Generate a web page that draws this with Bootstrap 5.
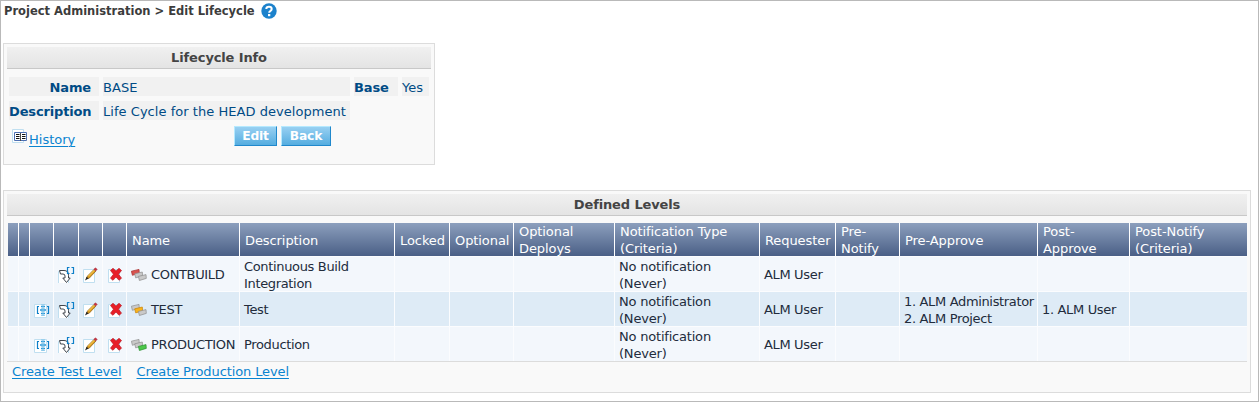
<!DOCTYPE html>
<html lang="en">
<head>
<meta charset="utf-8">
<title>Edit Lifecycle</title>
<link href="https://cdn.jsdelivr.net/npm/bootstrap@5.3.0/dist/css/bootstrap.min.css" rel="stylesheet">
<style>
body{font:13px/17px "DejaVu Sans",sans-serif;color:#222c3c;background:#fff;margin:0}
.page{height:402px;border:1px solid #b9b9b9;padding:0 0 0 2px;overflow:hidden}
.crumb{height:42px;padding:1px 0 0 1px;font-size:11.5px;font-weight:700;color:#3c3c3c}
.crumb-text{line-height:19px;white-space:nowrap}
.help{margin:1px 0 0 6px}
.panel{background:#f9f9f9;border:1px solid #dcdcdc;padding:3px;border-radius:0}
.panel-info{width:432px;height:122px}
.panel-levels{width:1248px;height:203px;margin-top:25px}
.panel-title{height:22px;line-height:21px;text-align:center;font-weight:700;font-size:13px;letter-spacing:-.13px;color:#444;background:linear-gradient(#f0f0f0,#e4e4e4);border-bottom:1px solid #c8c8c8}
.info-grid{display:grid;grid-template-columns:90px 247px 44px 27px;column-gap:4px;row-gap:5px;margin:8px 0 0 2px;color:#004b85}
.info-grid>div{height:19px;line-height:21px;background:#f1f1f1;white-space:nowrap;letter-spacing:.04px}
.info-grid .lbl{font-weight:700;letter-spacing:-.15px}
.info-actions{margin-top:6px}
.hist{width:227px;padding:3px 0 0 5px}
.hist a{margin-top:2px}
a{color:#0a84d0;text-decoration:underline;text-underline-offset:2px;text-decoration-thickness:1px}
.btn-act{height:20px;padding:0;border-radius:0;border:1px solid;border-color:#b5e9ff #2088cc #2088cc #b5e9ff;background:linear-gradient(#98d0f2,#55ade0);color:#fff;font-weight:700;font-size:12.3px;line-height:18px;letter-spacing:-.15px}
.btn-edit{width:43px}.btn-back{width:50px}
.levels{table-layout:fixed;width:1239px;margin:7px 0 0 1px;border-collapse:separate;border-spacing:0}
.levels th{font-weight:400;color:#fff;background:linear-gradient(#8c9fbd,#4a5f86);height:33px;border-right:1px solid #fff;padding:1px 0 0 5px;line-height:17px;white-space:nowrap;background-clip:padding-box;letter-spacing:-.08px}
.levels td{background:#f3f7fc;border-right:1px solid #fbfcfe;border-top:1px solid #fbfcfe;padding:1px 0 0 4px;height:35px;line-height:17px;white-space:nowrap;vertical-align:middle;letter-spacing:-.2px}
.levels .lines{margin-bottom:-1px}
.levels th .lines{margin-top:-1px}
.levels .tight{letter-spacing:-.34px}
.levels tr.alt td{background:#deebf6}
.levels td.ico{padding:0}
.levels svg,.crumb svg,.hist svg{display:block;flex:none}
.levels tr>:last-child{border-right:0}
.foot-links{border-top:1px solid #dcdcdc;padding:1px 0 0 5px;gap:15px;letter-spacing:-.11px}
</style>
</head>
<body>
<svg width="0" height="0" class="position-absolute"><defs>
<g id="move"><path d="M.5 6.500h10v12H.5z" fill="#fff" stroke="#c0dff0"/><path d="M1.500 5.500H6q4.500 0 4.500 5v2.500h1.700L8.500 17.500 4.800 13H7v-2q0-2-2-2H2.500z" fill="#fff" stroke="#3f454c" stroke-linejoin="round"/><path d="M11.500 2.500H9.500v6h2M13.500 2.500h2v6h-2" fill="none" stroke="#0d7fc8" stroke-width="1.200"/></g>
<g id="split"><path d="M.5 4.500h12v13H.5z" fill="#fff" stroke="#c0dff0"/><path d="M7 4.500h4M7 15.500h4" stroke="#9bd0ed"/><path d="M7 6.500h4M7 13.500h4" stroke="#2596d8" stroke-width="1.500"/><path d="M6 10h6" stroke="#2596d8" stroke-width="1.500"/><path d="M7 8.500h4v3H7z" fill="#58b0e2"/><path d="M9 5v11" stroke="#7cc2e8"/><path d="M5 6.500H3.500v7H5M13 6.500h1.500v7H13" fill="none" stroke="#0d7fc8" stroke-width="1.200"/></g>
<g id="pencil"><path d="M1.500 4.500h11v13h-11z" fill="#fff" stroke="#c0dff0"/><path d="M4.500 13.500l1-2.500 6.500-6.500 1.800 1.700-6.600 7z" fill="#dc9f22" stroke="#8c5d12" stroke-width=".7"/><path d="M6.500 11l6-6" stroke="#ffd25b"/><path d="M11.800 4.300l1.500-1.500 2 1.500-1.500 1.700z" fill="#cc3340" stroke="#8d2330" stroke-width=".4"/><path d="M3 15.500l1.600-3.700 2 1.700z" fill="#252525"/></g>
<g id="del"><path d="M.5 4.500h11v13H.5z" fill="#fff" stroke="#c0dff0"/><path d="M2.500 5.500L5 3.300l3 2.800 3-2.800L13.500 5.500l-3 3.700 3 4L11 15.300 8 12l-3 3.300-2.500-2.100 3-4z" fill="#e81f27" stroke="#b81922" stroke-width=".7"/></g>
<path id="brick" d="M.4 2.200L8 .4 8.300 4.200 1.400 6.300z"/>
</defs></svg>
<main class="page">
<header class="crumb d-flex align-items-start"><span class="crumb-text">Project Administration &gt; Edit Lifecycle</span>
<svg class="help" width="16" height="16" viewBox="0 0 16 16"><circle cx="8" cy="8" r="7.700" fill="#1c82cc"/><path d="M5.300 6Q5.300 3.700 8 3.700T10.700 6Q10.700 7 9.500 7.800 8.200 8.600 8.200 9.700" fill="none" stroke="#fff" stroke-width="2"/><path d="M7 11h2.300v2.200H7z" fill="#fff"/></svg></header>
<section class="panel panel-info">
<div class="panel-title"><span>Lifecycle Info</span></div>
<div class="info-grid"><div class="lbl text-end pe-2"><span>Name</span></div><div><span>BASE</span></div><div class="lbl"><span>Base</span></div><div><span>Yes</span></div><div class="lbl"><span>Description</span></div><div><span>Life Cycle for the HEAD development</span></div></div>
<div class="info-actions d-flex"><div class="hist d-flex"><svg width="17" height="17" viewBox="0 0 17 17"><path d="M.5.500h11v13H.5z" fill="#fff" stroke="#c0dff0"/><path d="M2.500 3.500h12v8h-12z" fill="#fff" stroke="#4d6fb2"/><path d="M8.500 4v8" stroke="#4a4a4a"/><path d="M4 5.500h3.500M4 7.500h3.500M4 9.500h3.500M10 5.500h3.500M10 7.500h3.500M10 9.500h3.500" stroke="#111" stroke-width="1.200"/></svg><a href="#">History</a></div>
<div class="d-flex gap-1"><button class="btn btn-act btn-edit">Edit</button><button class="btn btn-act btn-back">Back</button></div></div>
</section>
<section class="panel panel-levels">
<div class="panel-title"><span>Defined Levels</span></div>
<table class="levels"><colgroup id="cols"></colgroup><thead><tr id="heads"></tr></thead><tbody id="rows"></tbody></table>
<div class="foot-links d-flex"><a href="#">Create Test Level</a><a href="#">Create Production Level</a></div>
</section>
</main>
<script src="https://cdn.jsdelivr.net/npm/bootstrap@5.3.0/dist/js/bootstrap.bundle.min.js"></script>
<script>
document.getElementById('cols').innerHTML=[11,11,24,25,24,24,113,155,55,64,101,145,76,64,138,92,117].map(w=>`<col style="width:${w}px">`).join('');
const cell=t=>t.includes('<br>')?`<div class="lines">${t}</div>`:t;
document.getElementById('heads').innerHTML=['','','','','','','Name','Description','Locked','Optional','Optional<br>Deploys','Notification Type<br>(Criteria)','Requester','Pre-<br>Notify','Pre-Approve','Post-<br>Approve','Post-Notify<br>(Criteria)'].map(t=>`<th>${cell(t)}</th>`).join('');
const icon=(id,x)=>`<svg width="18" height="18" viewBox="0 0 18 18" style="margin-left:${x}px"><use href="#${id}"/></svg>`;
const bricks=(n,c)=>'<svg width="16" height="12" viewBox="0 0 16 12">'+[[0,0],[3.3,2.6],[7,5.2]].map((p,i)=>`<use href="#brick" x="${p[0]}" y="${p[1]}" fill="${i==n?c[0]:'#c9c9c9'}" stroke="${i==n?c[1]:'#8e8e8e'}" stroke-width=".7"/>`).join('')+'</svg>';
const data=[['CONTBUILD','Continuous Build<br>Integration',['#d9534f','#a52a2a'],'',''],['TEST','Test',['#f8b31c','#c98209'],'1. ALM Administrator<br>2. ALM Project','1. ALM User'],['PRODUCTION','Production',['#4cc84a','#2b8f30'],'','']];
document.getElementById('rows').innerHTML=data.map((r,i)=>`<tr class="${i==1?'alt':''}"><td></td><td></td><td class="ico">${i?icon('split',4):''}</td><td class="ico">${icon('move',4)}</td><td class="ico">${icon('pencil',3)}</td><td class="ico">${icon('del',5)}</td><td class="tight"><div class="d-flex align-items-center gap-1">${bricks(i,r[2])}<span>${r[0]}</span></div></td><td class="tight">${cell(r[1])}</td><td></td><td></td><td></td><td>${cell('No notification<br>(Never)')}</td><td class="tight">ALM User</td><td></td><td class="tight">${cell(r[3])}</td><td class="tight">${r[4]}</td><td></td></tr>`).join('');
</script>
</body></html>
